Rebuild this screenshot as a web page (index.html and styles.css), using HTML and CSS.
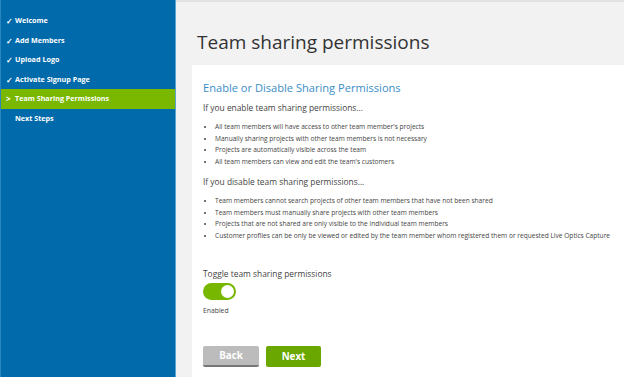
FILE: index.html
```html
<!DOCTYPE html>
<html lang="en">
<head>
    <meta charset="UTF-8">
    <meta name="viewport" content="width=device-width, initial-scale=1.0">
    <title>Team sharing permissions</title>
    <link rel="stylesheet" href="styles.css">
</head>
<body>
    <div class="wizard">
        <nav class="steps">
            <ul>
                <li class="done">Welcome</li>
                <li class="done">Add Members</li>
                <li class="done">Upload Logo</li>
                <li class="done">Activate Signup Page</li>
                <li class="current">Team Sharing Permissions</li>
                <li>Next Steps</li>
            </ul>
        </nav>

        <main class="main">
            <h1>Team sharing permissions</h1>

            <section class="panel">
                <h2>Enable or Disable Sharing Permissions</h2>

                <h3>If you enable team sharing permissions...</h3>
                <ul class="points">
                    <li>All team members will have access to other team member's projects</li>
                    <li>Manually sharing projects with other team members is not necessary</li>
                    <li>Projects are automatically visible across the team</li>
                    <li>All team members can view and edit the team's customers</li>
                </ul>

                <h3>If you disable team sharing permissions...</h3>
                <ul class="points">
                    <li>Team members cannot search projects of other team members that have not been shared</li>
                    <li>Team members must manually share projects with other team members</li>
                    <li>Projects that are not shared are only visible to the individual team members</li>
                    <li>Customer profiles can be only be viewed or edited by the team member whom registered them or requested Live Optics Capture</li>
                </ul>

                <div class="toggle-group">
                    <label class="toggle-label">Toggle team sharing permissions</label>
                    <span class="switch on"><span class="knob"></span></span>
                    <span class="toggle-state">Enabled</span>
                </div>

                <div class="actions">
                    <button class="btn btn-back">Back</button>
                    <button class="btn btn-next">Next</button>
                </div>
            </section>
        </main>
    </div>
</body>
</html>
```

FILE: styles.css
```css
/* Page */
body {
    margin: 0;
    padding: 0;
    font-family: 'Open Sans', sans-serif;
    background: white;
}

.wizard {
    display: flex;
    height: 377px;
    overflow: hidden;
}

/* Step list */
.steps {
    width: 174px;
    background: #006aaa;
    border-left: 1px solid #2a86c0;
    border-right: 1px solid #5aa3d3;
    flex-shrink: 0;
}

.steps ul {
    list-style: none;
    margin: 0;
    padding: 11px 0 0 0;
}

.steps li {
    height: 19.6px;
    line-height: 19.6px;
    padding-left: 14px;
    color: white;
    font-size: 7.2px;
    font-weight: bold;
    position: relative;
}

.steps li.done::before {
    content: "\2713";
    position: absolute;
    left: 5px;
    font-size: 8px;
}

.steps li.current {
    background: #7ab800;
}

.steps li.current::before {
    content: ">";
    position: absolute;
    left: 5px;
    font-size: 8px;
}

/* Main area */
.main {
    flex: 1;
    background: #f2f2f2;
    border-top: 2px solid #e2e2e2;
    display: flex;
    flex-direction: column;
}

h1 {
    margin: 0;
    padding: 27px 0 0 21px;
    height: 36px;
    font-size: 19px;
    font-weight: normal;
    color: #333;
}

.panel {
    flex: 1;
    margin-left: 16px;
    background: white;
    padding: 14px 0 0 11px;
}

h2 {
    margin: 0;
    font-size: 11.1px;
    font-weight: normal;
    color: #3b8ec7;
    line-height: 18px;
}

h3 {
    margin: 4px 0 6px;
    font-size: 8.4px;
    font-weight: normal;
    color: #444;
    line-height: 14px;
}

.points {
    margin: 0 0 7px;
    padding-left: 12px;
    font-size: 6.6px;
    line-height: 11.7px;
    color: #444;
}

.points li::marker {
    font-size: 7px;
}

/* Toggle */
.toggle-group {
    display: flex;
    flex-direction: column;
    align-items: flex-start;
    margin-top: 25px;
}

.toggle-label {
    font-size: 8.4px;
    color: #444;
    line-height: 14px;
}

.switch {
    margin-top: 2px;
    width: 33px;
    height: 17px;
    border-radius: 9px;
    background: #78b700;
    position: relative;
}

.switch .knob {
    position: absolute;
    right: 2px;
    top: 2px;
    width: 13px;
    height: 13px;
    border-radius: 50%;
    background: white;
}

.toggle-state {
    margin-top: 6px;
    font-size: 6.8px;
    color: #444;
}

/* Buttons */
.actions {
    display: flex;
    gap: 7px;
    margin-top: 31px;
}

.btn {
    width: 56px;
    height: 21px;
    border: none;
    border-radius: 2px;
    color: white;
    font-family: 'Open Sans', sans-serif;
    font-size: 9.8px;
    font-weight: bold;
    cursor: pointer;
}

.btn-back {
    background: #bcbcbc;
    border-bottom: 2px solid #777;
}

.btn-next {
    background: #6aa700;
    width: 55px;
}
```
